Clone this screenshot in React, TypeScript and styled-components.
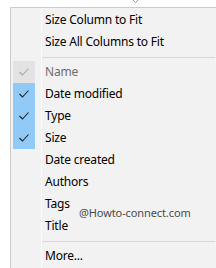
import React from "react";
import styled, { createGlobalStyle } from "styled-components";

const Global = createGlobalStyle`
  html, body { margin: 0; padding: 0; background: #ffffff; }
  body { width: 216px; height: 268px; overflow: hidden; font-family: "Noto Sans", "Liberation Sans", sans-serif; }
`;

const Page = styled.div`
  position: relative;
  width: 216px;
  height: 268px;
  padding-top: 7px;
  box-sizing: border-box;
`;

const Chevron = styled.svg`
  position: absolute;
  left: 132px;
  top: -1px;
`;

const Menu = styled.div`
  position: relative;
  margin-left: 10px;
  margin-right: -1px;
  border: 1px solid #cccccc;
  background: #f2f2f2;
  padding: 1px 1px 2px 2px;
`;

const Gutter = styled.div`
  position: absolute;
  left: 30px;
  top: 0;
  bottom: 0;
  width: 1px;
  background: #fbfbfb;
`;

const Row = styled.div`
  position: relative;
  display: grid;
  grid-template-columns: 22px 1fr;
  height: 22px;
  align-items: center;
`;

const CheckCell = styled.div<{ $state?: "on" | "disabled" | "off" }>`
  width: 22px;
  height: 22px;
  display: flex;
  align-items: center;
  justify-content: center;
  background: ${(p) =>
    p.$state === "on" ? "#91c9f7" : p.$state === "disabled" ? "#e3e3e3" : "transparent"};
`;

const Label = styled.span<{ $disabled?: boolean }>`
  padding-left: 10px;
  font-size: 12px;
  letter-spacing: -0.2px;
  line-height: 22px;
  color: ${(p) => (p.$disabled ? "#6d6d6d" : "#000000")};
  white-space: nowrap;
`;

const Separator = styled.div`
  height: 1px;
  background: #d7d7d7;
  margin: 4px 0 3px 28px;
`;

const Watermark = styled.span`
  position: absolute;
  left: 79px;
  top: 206px;
  font-size: 11px;
  letter-spacing: -0.1px;
  line-height: 14px;
  color: #4b4b4b;
  font-family: "Noto Sans", "Liberation Sans", sans-serif;
  white-space: nowrap;
`;

const Check = ({ color }: { color: string }) => (
  <svg width="12" height="10" viewBox="0 0 12 10">
    <path d="M1.5 5 L4.5 8 L10.5 1.5" fill="none" stroke={color} strokeWidth="1.1" />
  </svg>
);

type Item = { label: string; state?: "on" | "disabled" | "off" };

const group1: Item[] = [
  { label: "Size Column to Fit" },
  { label: "Size All Columns to Fit" },
];
const group2: Item[] = [
  { label: "Name", state: "disabled" },
  { label: "Date modified", state: "on" },
  { label: "Type", state: "on" },
  { label: "Size", state: "on" },
  { label: "Date created" },
  { label: "Authors" },
  { label: "Tags" },
  { label: "Title" },
];
const group3: Item[] = [{ label: "More..." }];

const renderItem = (it: Item) => (
  <Row key={it.label}>
    <CheckCell $state={it.state}>
      {it.state === "on" && <Check color="#222222" />}
      {it.state === "disabled" && <Check color="#a6a6a6" />}
    </CheckCell>
    <Label $disabled={it.state === "disabled"}>{it.label}</Label>
  </Row>
);

export default function App() {
  return (
    <>
      <Global />
      <Page>
        <Chevron width="7" height="5" viewBox="0 0 7 5">
          <path d="M0.5 0.5 L3.5 3.5 L6.5 0.5" fill="none" stroke="#9a9a9a" strokeWidth="1" />
        </Chevron>
        <Menu>
          <Gutter />
          {group1.map(renderItem)}
          <Separator />
          {group2.map(renderItem)}
          <Separator />
          {group3.map(renderItem)}
        </Menu>
        <Watermark>@Howto-connect.com</Watermark>
      </Page>
    </>
  );
}
